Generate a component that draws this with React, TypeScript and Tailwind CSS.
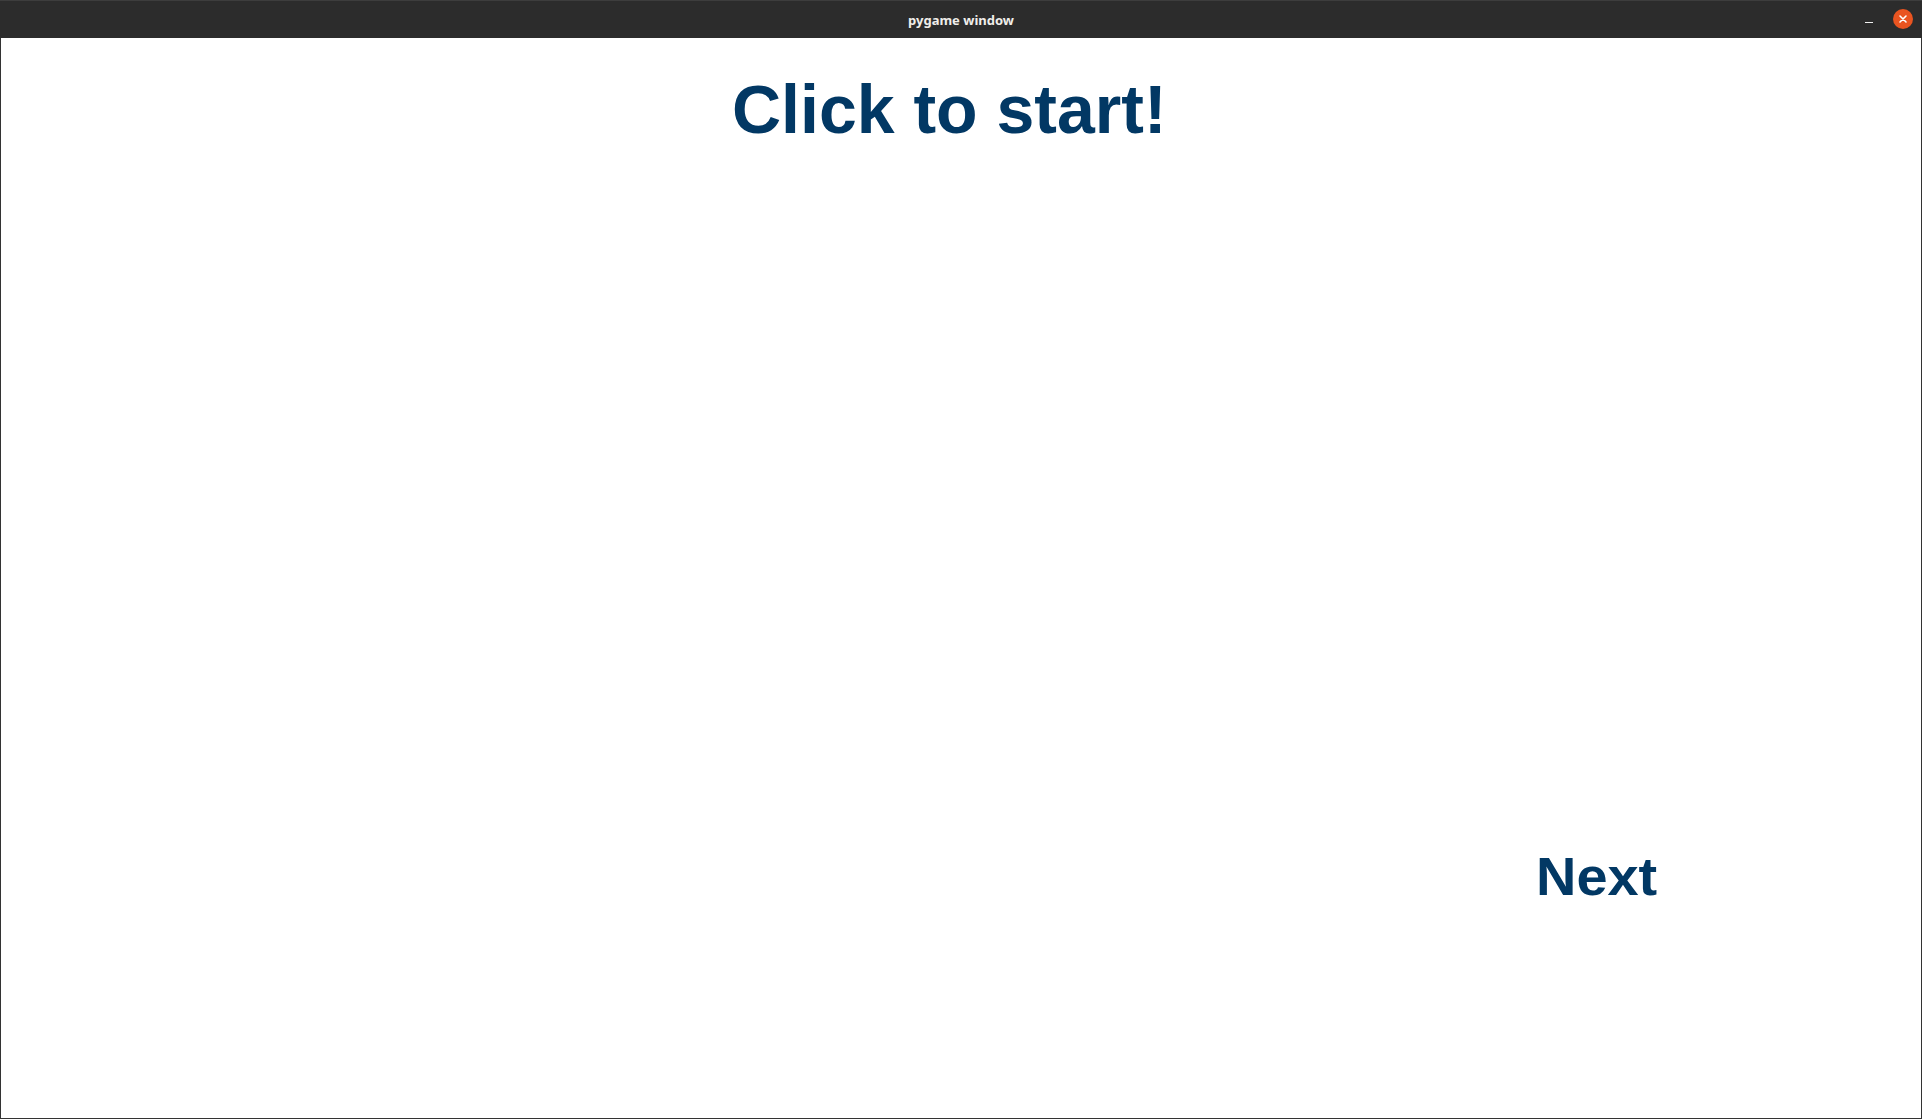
import React from 'react';

const App: React.FC = () => {
    return (
        <div className="w-[1922px] h-[1119px] flex flex-col bg-[#2c2c2c] overflow-hidden">
            {/* window title bar */}
            <div className="h-[38px] shrink-0 border-t border-[#3d3d3d] bg-[#2c2c2c] flex items-center relative">
                <div className="flex-1 text-center text-[13px] font-bold text-[#f0eeea] font-['Noto_Sans',sans-serif] pt-[2px]">
                    pygame window
                </div>
                <div className="absolute right-[9px] top-[8px] flex items-center gap-[20px]">
                    <div className="w-[8px] h-[1px] bg-[#f0f0f0] mt-[6px]" />
                    <div className="w-[20px] h-[20px] rounded-full bg-[#e95420] flex items-center justify-center">
                        <svg width="10" height="10" viewBox="0 0 10 10">
                            <path d="M2 2 L8 8 M8 2 L2 8" stroke="#fff" strokeWidth="1.6" strokeLinecap="round" />
                        </svg>
                    </div>
                </div>
            </div>

            {/* game surface */}
            <div className="flex-1 bg-white border-x border-b border-[#333333] font-['Liberation_Sans',Arial,sans-serif] font-bold text-[#023864]">
                <div className="pl-[731px] pt-[37px]">
                    <div className="text-[68px] leading-[68px] whitespace-nowrap">Click to start!</div>
                </div>
                <div className="pl-[1535px] mt-[707px]">
                    <div className="inline-block text-[53px] leading-[53px] whitespace-nowrap origin-left scale-x-[1.055]">Next</div>
                </div>
            </div>
        </div>
    );
};

export default App;
